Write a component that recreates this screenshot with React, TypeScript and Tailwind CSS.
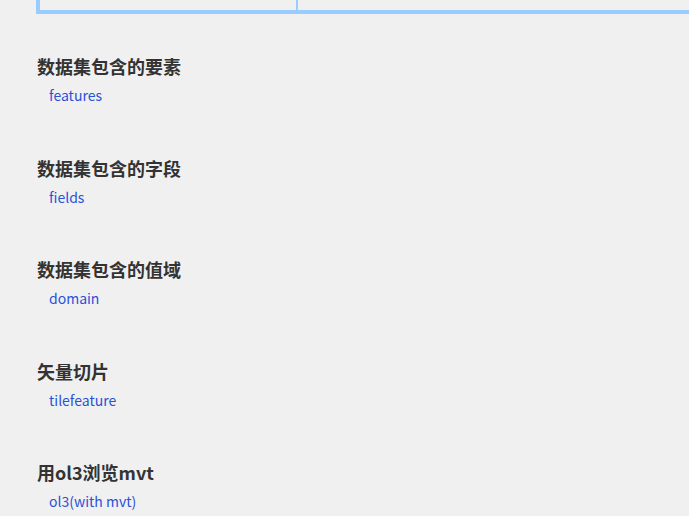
export default function App() {
  const items = [
    { h: "数据集包含的要素", l: "features" },
    { h: "数据集包含的字段", l: "fields" },
    { h: "数据集包含的值域", l: "domain" },
    { h: "矢量切片", l: "tilefeature" },
    { h: "用ol3浏览mvt", l: "ol3(with mvt)" },
  ];
  return (
    <div
      className="min-h-screen w-full overflow-hidden bg-[#f0f0f0]"
      style={{ fontFamily: '"Noto Sans CJK SC", "Noto Sans", sans-serif' }}
    >
      <div className="pl-[36px]">
        <div className="flex h-[14px] w-[720px] border-b-4 border-l-4 border-[#99ccff]">
          <div className="w-[258px] border-r-2 border-[#99ccff]" />
          <div className="flex-1" />
        </div>
        <div className="mt-[39px] flex flex-col gap-[48.6px]">
          {items.map((it) => (
            <div key={it.l} className="flex flex-col gap-[6px]">
              <h3 className="pl-px text-[18px] font-bold leading-[26px] text-[#333333]">{it.h}</h3>
              <a href="#" className="pl-[13px] text-[14px] leading-[21px] text-[#2952d9]">
                {it.l}
              </a>
            </div>
          ))}
        </div>
      </div>
    </div>
  );
}
